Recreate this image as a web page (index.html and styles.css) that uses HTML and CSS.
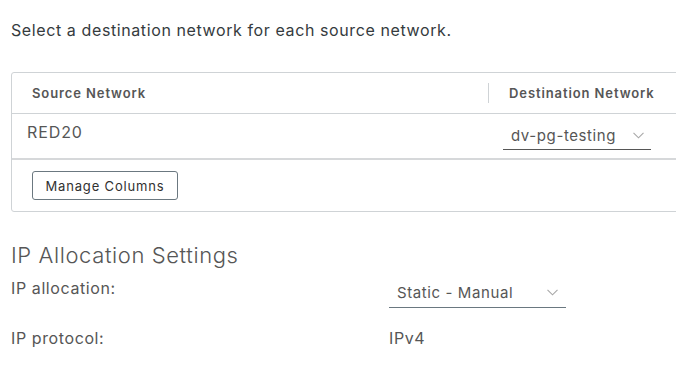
FILE: index.html
```html
<!DOCTYPE html>
<html lang="en">

<head>
    <meta charset="UTF-8">
    <title>Network Mapping</title>
    <link rel="stylesheet" href="styles.css">
</head>

<body>
    <p class="intro">Select a destination network for each source network.</p>

    <div class="datagrid">
        <div class="dg-head">
            <div class="dg-cell col-src">Source Network</div>
            <div class="dg-cell col-dst"><span class="sep"></span>Destination Network</div>
        </div>
        <div class="dg-row">
            <div class="dg-cell col-src">RED20</div>
            <div class="dg-cell col-dst">
                <div class="select net-select">
                    <span>dv-pg-testing</span>
                    <svg class="chevron" width="11" height="7" viewBox="0 0 11 7">
                        <path d="M0.5 0.8 L5.5 5.8 L10.5 0.8" fill="none" stroke="#a8a8a8" stroke-width="1.1" />
                    </svg>
                </div>
            </div>
        </div>
        <div class="dg-foot">
            <button class="btn-columns">Manage Columns</button>
        </div>
    </div>

    <h2 class="section-title">IP Allocation Settings</h2>
    <div class="form-grid">
        <label class="form-label">IP allocation:</label>
        <div class="form-value">
            <div class="select ip-select">
                <span>Static - Manual</span>
                <svg class="chevron" width="11" height="7" viewBox="0 0 11 7">
                    <path d="M0.5 0.8 L5.5 5.8 L10.5 0.8" fill="none" stroke="#a8a8a8" stroke-width="1.1" />
                </svg>
            </div>
        </div>
        <label class="form-label proto">IP protocol:</label>
        <div class="form-value proto">IPv4</div>
    </div>
</body>

</html>
```

FILE: styles.css
```css
html,
body {
    overflow: hidden;
}

body {
    font-family: Inter, "Open Sans", sans-serif;
    color: #565656;
    background-color: #fff;
    letter-spacing: 0.6px;
    margin: 0;
    padding: 0 0 0 11px;
}

.intro {
    margin: 20px 0 0;
    font-size: 16px;
    line-height: 20px;
    color: #353b3e;
}

.datagrid {
    width: 720px;
    margin-top: 32px;
    border: 1px solid #cfd3d6;
    border-radius: 3px;
}

.dg-head,
.dg-row {
    display: flex;
}

.dg-head {
    height: 40px;
    border-bottom: 1px solid #cfd3d6;
    font-size: 13px;
    font-weight: 600;
    letter-spacing: 0.9px;
    color: #565656;
}

.dg-head .dg-cell {
    display: flex;
    align-items: center;
}

.dg-cell.col-src {
    width: 476px;
    box-sizing: border-box;
}

.dg-cell.col-dst {
    position: relative;
    flex: 1;
}

.dg-head .col-src {
    padding-left: 20px;
}

.dg-head .col-dst {
    padding-left: 21px;
}

.sep {
    position: absolute;
    left: 0;
    top: 10px;
    width: 1px;
    height: 20px;
    background-color: #cfd3d6;
}

.dg-row {
    height: 44px;
    border-bottom: 2px solid #d6d8da;
    font-size: 15px;
}

.dg-row .col-src {
    padding: 8px 0 0 15px;
    font-size: 16px;
    letter-spacing: 0.9px;
}

.dg-row .col-dst {
    padding: 8px 0 0 15px;
}

.select {
    display: flex;
    align-items: center;
    justify-content: space-between;
    box-sizing: border-box;
    height: 28px;
    border-bottom: 1px solid #565656;
    font-size: 15px;
    color: #565656;
}

.net-select {
    width: 148px;
    padding: 0 7px 0 8px;
}

.dg-foot {
    height: 51px;
    padding: 11px 0 0 20px;
    box-sizing: border-box;
}

.btn-columns {
    width: 146px;
    height: 29px;
    font-family: inherit;
    font-size: 13px;
    letter-spacing: 0.85px;
    color: #313131;
    background-color: #fff;
    border: 1px solid #6b7880;
    border-radius: 3px;
    padding: 0;
    cursor: pointer;
}

.section-title {
    margin: 30px 0 0;
    font-size: 22px;
    line-height: 26px;
    font-weight: 300;
    color: #565656;
}

.form-grid {
    display: grid;
    grid-template-columns: 378px auto;
    align-items: start;
    margin-top: 3px;
    font-size: 16px;
    color: #565656;
}

.form-label {
    line-height: 20px;
    padding-top: 7px;
}

.form-value {
    padding-top: 7px;
}

.ip-select {
    width: 177px;
    height: 30px;
    padding: 0 8px 0 8px;
    border-bottom-color: #6a7880;
}

.proto {
    padding-top: 20px;
    line-height: 20px;
}
```
